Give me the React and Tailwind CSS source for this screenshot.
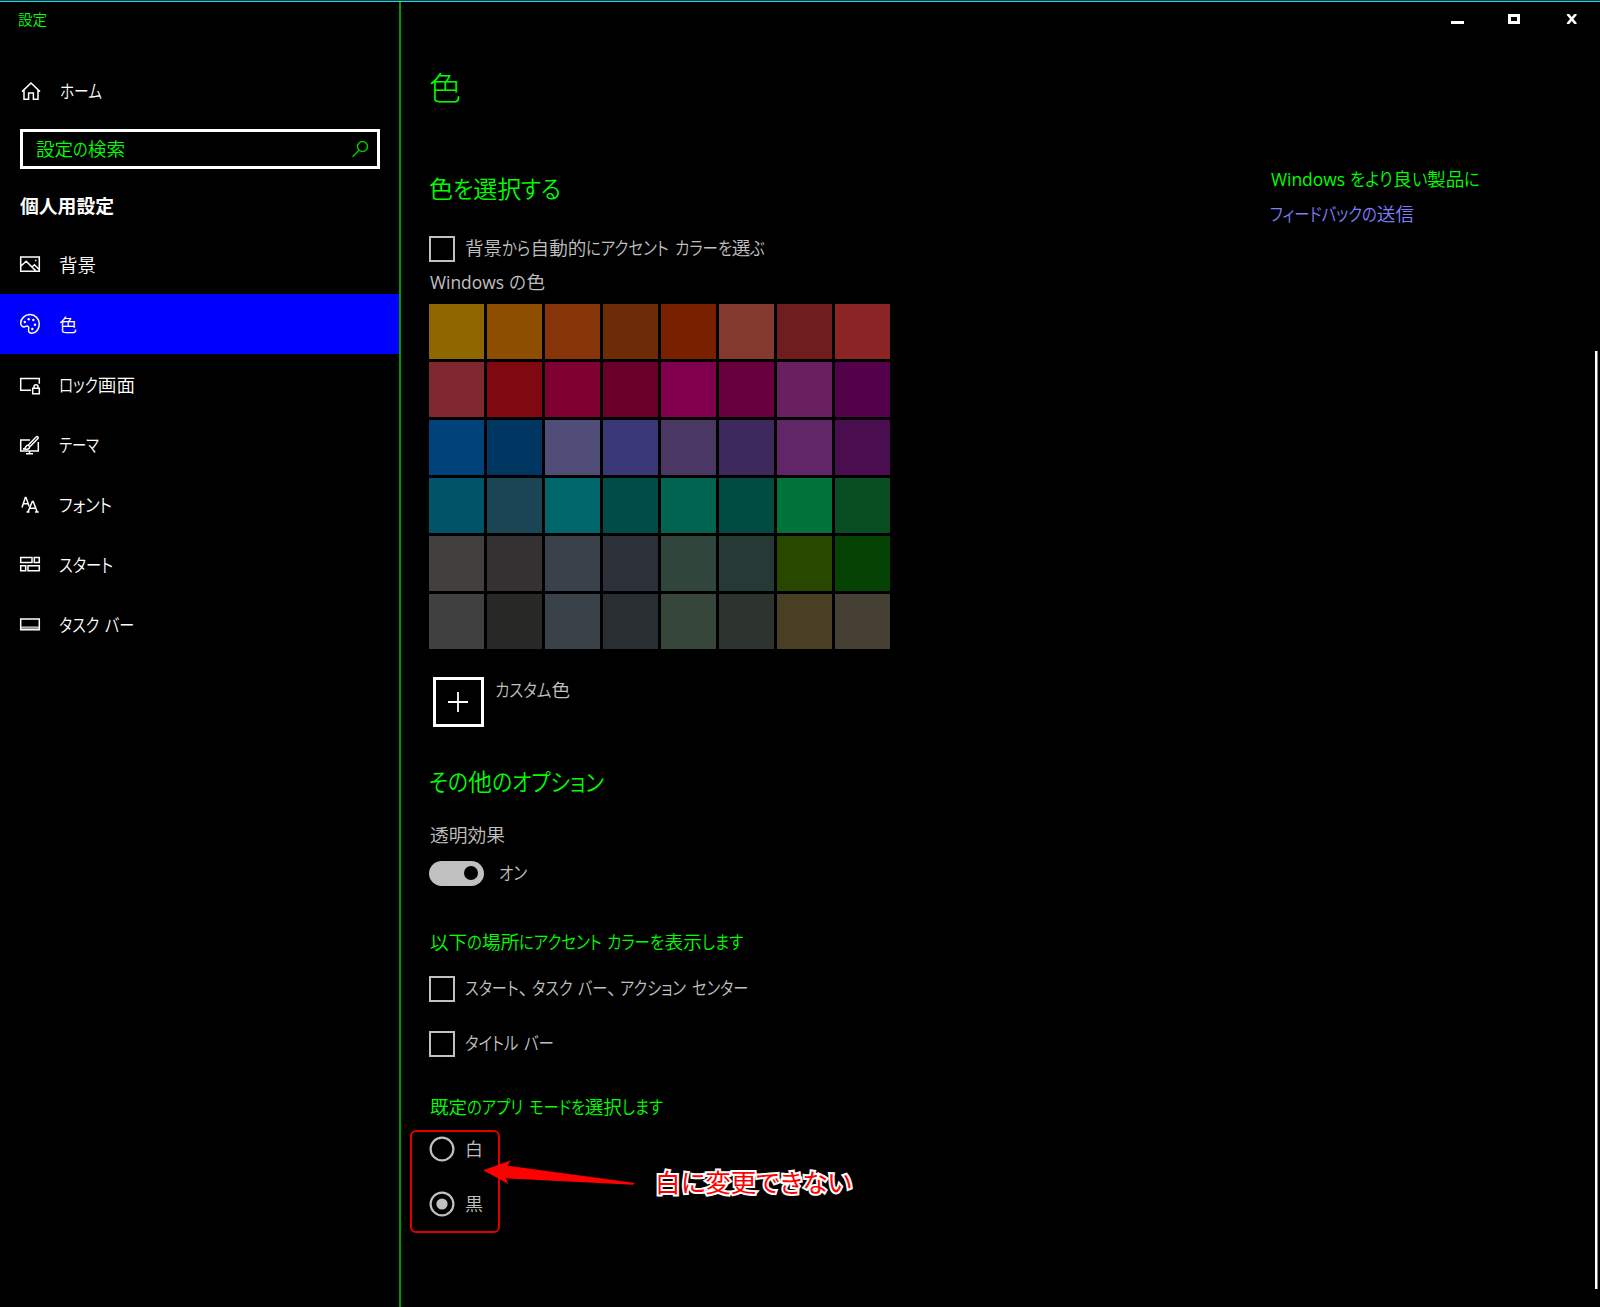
import { useLayoutEffect, useRef } from "react";

const RUNS = /([\u3003-\u30ff]+|、| )/;
const KANA = /[\u3003-\u30ff]/;

const runStyle = (t) => {
  if (t === "、") return "w-[13px]";
  if (t === " ") return "w-[5.5px]";
  if (/^[A-Za-z]/.test(t)) return "text-[17.4px] font-normal";
  return "";
};

/* Japanese UI text with condensed kana: kana runs are narrowed until the line is `w` pixels wide. */
function Jp({ children, w, className = "" }) {
  const ref = useRef(null);
  useLayoutEffect(() => {
    const runs = [...ref.current.querySelectorAll("[data-run]")];
    runs.forEach((r) => {
      r.style.transform = "";
      r.style.marginRight = "";
    });
    let kana = 0;
    let rest = 0;
    runs.forEach((r) => {
      const width = r.getBoundingClientRect().width;
      if (r.dataset.run === "kana") kana += width;
      else rest += width;
    });
    const hasKana = kana > 0;
    const scale = hasKana ? (w - rest) / kana : w / rest;
    runs.forEach((r) => {
      if (hasKana && r.dataset.run !== "kana") return;
      const width = r.getBoundingClientRect().width;
      r.style.transform = `scaleX(${scale})`;
      r.style.marginRight = `${(scale - 1) * width}px`;
    });
  }, [w, children]);
  return (
    <span ref={ref} className={`block whitespace-pre ${className}`}>
      {children.split(RUNS).filter(Boolean).map((t, i) => (
        <span
          key={i}
          data-run={KANA.test(t) ? "kana" : "other"}
          className={`inline-block origin-left whitespace-pre ${runStyle(t)}`}
        >
          {t}
        </span>
      ))}
    </span>
  );
}

const ico = "block h-5 w-5 shrink-0 overflow-visible";
const line = { fill: "none", stroke: "currentColor", strokeWidth: 1.5 };

const HomeIcon = () => (
  <svg viewBox="0 0 20 20" className={ico} {...line}>
    <path d="M2 10.6 11 2l9 8.6M4 9v9.3h4.6v-6.2h4.8v6.2H18V9" />
  </svg>
);
const PictureIcon = () => (
  <svg viewBox="0 0 20 20" className={ico} {...line}>
    <path d="M.7 3h18.6v14.3H.7zM1 12l5.2-4.7 9.6 9.6M12 13l2.4-2.3 5 5" />
    <path d="M15 6.5h1.4" />
  </svg>
);
const PaletteIcon = () => (
  <svg viewBox="0 0 20 20" className={ico} {...line}>
    <path d="M.7 9.3C.7 4.400 5 .6 10 .6c5.200 0 9.300 4.200 9.300 9.400 0 5-3.300 9.300-7.300 9.300-2.600 0-3.800-1.400-3.400-3.600.4-2 .3-2.700-.5-3.300-.9-.7-1.700-.4-2.700.1C3.200 13.600.700 12 .7 9.300z" />
    <g fill="currentColor" stroke="none">
      <circle cx="4.800" cy="8" r="1.200" />
      <circle cx="8.700" cy="5.300" r="1.200" />
      <circle cx="13.300" cy="6" r="1.200" />
      <circle cx="15" cy="10.700" r="1.200" />
      <circle cx="12.300" cy="15" r="1.200" />
    </g>
  </svg>
);
const LockIcon = () => (
  <svg viewBox="0 0 20 20" className={ico} {...line}>
    <path d="M11 16.300H.7V4.600h18.600v5.200" />
    <path d="M12.700 14.300h6.600v5.500h-6.600zM14 14v-1.300c0-2.600 4-2.600 4 0V14" />
  </svg>
);
const ThemeIcon = () => (
  <svg viewBox="0 0 20 20" className={ico} {...line}>
    <path d="M10 6H.7v11h17.600V8M6 19.700h7M9.500 17v2.700" />
    <path d="M3 15c2 0 2.500-1 3-2.400.7-1.600 2.800-1.700 3.400-.4.800 1.700-.8 3.100-2.700 3.100zM8.400 11l7.700-8c1.300-1 2.700.2 1.800 1.600l-7.800 7.900" />
  </svg>
);
const FontIcon = () => (
  <svg viewBox="0 0 20 20" className={ico} {...line}>
    <path d="M2 13.500 5.300 3.500h.7l3.200 9M3.200 9.800h4.600" />
    <path d="M8 17.900 12.300 7.500h.9l4 10.400M9.500 14.200h6.200M6.500 18.100h3M15 18.100h3.700" />
  </svg>
);
const StartIcon = () => (
  <svg viewBox="0 0 20 20" className={ico} {...line}>
    <path d="M.7 3.500h11.300v5H.7zM14.300 3.500h5v5h-5zM.7 11.700h5v5h-5zM8 11.700h11.300v5H8z" />
  </svg>
);
const TaskbarIcon = () => (
  <svg viewBox="0 0 20 20" className={ico} {...line}>
    <path d="M.7 5h18.600v10.800H.7z" />
    <path d="M1 13.600h18" strokeWidth="2.400" opacity=".7" />
  </svg>
);

const NAV = [
  ["背景", 37, PictureIcon],
  ["色", 18, PaletteIcon],
  ["ロック画面", 76, LockIcon],
  ["テーマ", 40, ThemeIcon],
  ["フォント", 53, FontIcon],
  ["スタート", 54, StartIcon],
  ["タスク バー", 75, TaskbarIcon],
];

const SWATCHES = [
  "#8e6700", "#8e4e00", "#873408", "#6e2b08", "#782000", "#84392e", "#701d20", "#8b2525",
  "#80282f", "#800810", "#800032", "#6a002a", "#80004e", "#680040", "#691f60", "#54004a",
  "#00427a", "#003662", "#504e78", "#3b3877", "#4b3764", "#3e295c", "#602668", "#4a0e50",
  "#005468", "#1b4454", "#00666b", "#004c49", "#006450", "#004c42", "#00733a", "#094d22",
  "#42403e", "#343132", "#39424a", "#2c3038", "#30463c", "#263934", "#284800", "#054305",
  "#414040", "#282827", "#394248", "#282e31", "#36463a", "#2d332f", "#493f25", "#463f34",
];

function Check({ label, w }) {
  return (
    <div className="flex h-[26px] items-center">
      <div className="h-[26px] w-[26px] border-[2.5px] border-[#c0c0c0]" />
      <Jp w={w} className="-mt-[3px] ml-[10px]">{label}</Jp>
    </div>
  );
}

function Radio({ label, on }) {
  return (
    <div className="flex h-[26px] items-center">
      <svg viewBox="0 0 26 26" className="h-[26px] w-[26px]">
        <circle cx="13" cy="13" r="11.400" fill="none" stroke="#c0c0c0" strokeWidth="2.200" />
        {on && <circle cx="13" cy="13" r="5.600" fill="#c0c0c0" />}
      </svg>
      <Jp w={18} className="ml-[10px]">{label}</Jp>
    </div>
  );
}

export default function App() {
  return (
    <div
      lang="ja"
      className="relative flex h-[1307px] w-[1600px] flex-col overflow-hidden bg-black text-[18.6px] leading-6 font-[350] text-[#c0c0c0] [font-feature-settings:'palt'] font-['Open_Sans','Noto_Sans_CJK_JP',sans-serif]"
    >
      <div className="h-[2px] shrink-0 border-t border-[#003838] bg-[#20d8e8]" />
      <div className="flex grow">
        <aside className="flex w-[401px] shrink-0 flex-col border-r-2 border-[#009c00] text-white">
          <Jp w={29} className="mt-[5px] ml-[18px] text-[14.600px] text-[#00ff00]">設定</Jp>
          <div className="mt-[48px] flex h-6 items-center pl-5">
            <HomeIcon />
            <Jp w={42} className="ml-[20px]">ホーム</Jp>
          </div>
          <div className="ml-[20px] mt-[26px] flex h-10 w-[360px] items-center justify-between border-[3px] border-white pr-2 pl-[13px]">
            <Jp w={89} className="text-[#00ff00]">設定の検索</Jp>
            <svg viewBox="0 0 18 18" className="h-[18px] w-[18px] text-[#00c800]" {...line}>
              <circle cx="11.500" cy="6.500" r="5" />
              <path d="M8 10.200 1.500 16.700" />
            </svg>
          </div>
          <Jp w={94} className="mt-[25px] ml-5 font-bold">個人用設定</Jp>
          <nav className="mt-4">
            {NAV.map(([label, w, Icon], i) => (
              <div
                key={label}
                className={`flex h-[60px] items-center pl-5 ${i === 1 ? "bg-[#0000ff]" : ""}`}
              >
                <Icon />
                <Jp w={w} className="mt-px ml-[19px]">{label}</Jp>
              </div>
            ))}
          </nav>
        </aside>

        <main className="flex w-[841px] shrink-0 flex-col items-start pl-[28px]">
          <h1 className="mt-[66px] h-10 text-[32px] leading-10 font-light text-[#00ff00]">
            <Jp w={32}>色</Jp>
          </h1>
          <h2 className="mt-[65px] text-[24px] leading-8 text-[#00ff00]">
            <Jp w={132}>色を選択する</Jp>
          </h2>
          <div className="mt-[31px]">
            <Check label="背景から自動的にアクセント カラーを選ぶ" w={300} />
          </div>
          <Jp w={115} className="mt-2 ml-px">Windows の色</Jp>
          <div className="mt-[10px] grid grid-cols-[repeat(8,55px)] gap-[3px]">
            {SWATCHES.map((c, i) => (
              <div key={i} className="h-[55px]" style={{ backgroundColor: c }} />
            ))}
          </div>
          <div className="mt-7 ml-1 flex">
            <div className="flex h-[50px] w-[51px] items-center justify-center border-[3px] border-white pr-px">
              <svg viewBox="0 0 20 20" className="h-5 w-5" fill="none" stroke="#fff" strokeWidth="1.800">
                <path d="M0 10h20M10 0v20" />
              </svg>
            </div>
            <Jp w={75} className="mt-px ml-[11px]">カスタム色</Jp>
          </div>
          <h2 className="mt-[39px] text-[24px] leading-8 text-[#00ff00]">
            <Jp w={175}>その他のオプション</Jp>
          </h2>
          <Jp w={75} className="mt-[25px] ml-px">透明効果</Jp>
          <div className="mt-[13px] flex h-[26px] items-center">
            <div className="flex h-[25px] w-[55px] items-center justify-end rounded-full bg-[#c0c0c0] pr-[6px]">
              <div className="h-[14px] w-[14px] rounded-full bg-black" />
            </div>
            <Jp w={28} className="ml-[15px]">オン</Jp>
          </div>
          <Jp w={313} className="mt-[44px] ml-px text-[#00ff00]">以下の場所にアクセント カラーを表示します</Jp>
          <div className="mt-[22px] space-y-[29px]">
            <Check label="スタート、タスク バー、アクション センター" w={283} />
            <Check label="タイトル バー" w={89} />
          </div>
          <Jp w={233} className="mt-[38px] ml-px text-[#00ff00]">既定のアプリ モードを選択します</Jp>
          <div className="mt-[17px] space-y-[29px]">
            <Radio label="白" />
            <Radio label="黒" on />
          </div>
        </main>

        <aside className="flex flex-col pt-[165px]">
          <Jp w={209} className="ml-[29px] text-[#00ff00]">Windows をより良い製品に</Jp>
          <Jp w={144} className="mt-[11px] ml-[28px] text-[#8080ff]">フィードバックの送信</Jp>
        </aside>
      </div>

      <div className="absolute top-[14px] right-[22px] flex h-[11px] items-start text-white">
        <div className="mt-[7px] h-[3px] w-[13px] bg-white" />
        <div className="ml-[44px] h-[10px] w-[12px] border-[3px] border-white" />
        <svg viewBox="0 0 12 10" className="ml-[46px] h-[10px] w-[12px]" fill="none" stroke="currentColor" strokeWidth="2.600">
          <path d="M1.500 0 10 10M10 0 1.500 10" />
        </svg>
      </div>
      <div className="absolute top-[351px] right-[2px] h-[938px] w-[3px] border-r border-[#808080] bg-white" />

      <div className="absolute top-[1130px] left-[410px] h-[103px] w-[90px] rounded-[6px] border-2 border-[#e00000]" />
      <svg viewBox="0 0 154 28" className="absolute top-[1159px] left-[482px] h-[28px] w-[154px]" fill="#ff0000">
        <path d="M1.300 11.300 29 1.300l-3.700 5.400L153 24l-2 1.800L24 19.300l2.300 5.700z" />
      </svg>
      <div className="absolute top-[1165px] left-[655px] text-[25.500px] leading-[34px] font-normal text-[#ff0000] [-webkit-text-stroke:4px_white] [paint-order:stroke_fill]">
        <Jp w={197}>白に変更できない</Jp>
      </div>
    </div>
  );
}
